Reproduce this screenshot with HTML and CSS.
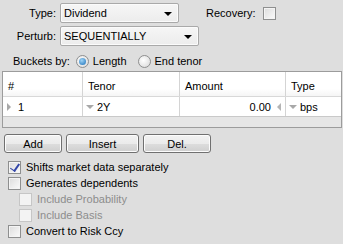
FILE: index.html
```html
<!DOCTYPE html>
<html lang="en">

<head>
    <meta charset="UTF-8">
    <title>Shift settings</title>
    <link rel="stylesheet" href="styles.css">
</head>

<body>
    <div class="panel">
        <div class="field-row first">
            <span class="field-label">Type:</span>
            <div class="combo combo-type"><span>Dividend</span><i class="combo-arrow"></i></div>
            <span class="recovery-label">Recovery:</span>
            <span class="check"></span>
        </div>

        <div class="field-row second">
            <span class="field-label">Perturb:</span>
            <div class="combo combo-perturb"><span>SEQUENTIALLY</span><i class="combo-arrow"></i></div>
        </div>

        <div class="buckets-row">
            <span>Buckets by:</span>
            <span class="radio checked"></span><span>Length</span>
            <span class="radio"></span><span>End tenor</span>
        </div>

        <div class="grid">
            <div class="grid-head">
                <div class="cell c1">#</div>
                <div class="cell c2">Tenor</div>
                <div class="cell c3">Amount</div>
                <div class="cell c4">Type</div>
            </div>
            <div class="grid-row">
                <div class="cell c1"><i class="tri-right"></i>1</div>
                <div class="cell c2"><i class="tri-down"></i>2Y</div>
                <div class="cell c3 num">0.00<i class="tri-left"></i></div>
                <div class="cell c4"><i class="tri-down"></i>bps</div>
            </div>
            <div class="grid-empty"></div>
        </div>

        <div class="button-row">
            <button class="btn btn-add">Add</button>
            <button class="btn btn-insert">Insert</button>
            <button class="btn btn-del">Del.</button>
        </div>

        <div class="options">
            <label class="option"><span class="check checked"></span>Shifts market data separately</label>
            <label class="option"><span class="check"></span>Generates dependents</label>
            <label class="option sub disabled"><span class="check"></span>Include Probability</label>
            <label class="option sub disabled"><span class="check"></span>Include Basis</label>
            <label class="option"><span class="check"></span>Convert to Risk Ccy</label>
        </div>
    </div>
</body>

</html>
```

FILE: styles.css
```css
* {
    margin: 0;
    padding: 0;
    box-sizing: border-box;
}

body {
    font-family: 'Liberation Sans', Arial, sans-serif;
    font-size: 11px;
    color: #000;
    background: #dedede;
    width: 343px;
    height: 244px;
    overflow: hidden;
}

.panel {
    padding-top: 3px;
}

.field-row {
    display: flex;
    align-items: center;
    height: 20px;
}

.field-row.second {
    margin-top: 3px;
}

.field-label {
    width: 60px;
    padding-right: 4px;
    text-align: right;
}

.combo {
    position: relative;
    height: 20px;
    border: 1px solid #a9a9a9;
    border-radius: 2px;
    background: linear-gradient(#f6f6f6, #ececec);
    box-shadow: inset 0 0 0 1px #fbfbfb;
    padding-left: 3px;
    display: flex;
    align-items: center;
}

.combo-type {
    width: 119px;
}

.combo-perturb {
    width: 139px;
}

.combo-arrow {
    position: absolute;
    right: 6px;
    top: 8px;
    border-left: 4px solid transparent;
    border-right: 4px solid transparent;
    border-top: 4px solid #000;
}

.recovery-label {
    margin-left: 27px;
}

.recovery-label + .check {
    margin-left: 7px;
}

.check {
    display: inline-block;
    position: relative;
    width: 13px;
    height: 13px;
    border: 1px solid #8e8f8f;
    background: linear-gradient(135deg, #dcdcdc, #fbfbfb);
    box-shadow: inset 0 0 0 1px #f4f4f4;
    flex: none;
}

.check.checked::after {
    content: '';
    position: absolute;
    left: 3px;
    top: 0;
    width: 4px;
    height: 8px;
    border-right: 2px solid #3346a8;
    border-bottom: 1px solid #3346a8;
    transform: rotate(35deg);
}

.buckets-row {
    display: flex;
    align-items: center;
    height: 16px;
    margin-top: 7px;
    padding-left: 13px;
}

.radio {
    display: inline-block;
    position: relative;
    width: 13px;
    height: 13px;
    border: 1px solid #8e8f8f;
    border-radius: 50%;
    background: radial-gradient(circle at 40% 40%, #ffffff, #d6d6d6);
    margin: 0 4px 0 6px;
}

.radio + span + .radio {
    margin-left: 11px;
}

.radio.checked::after {
    content: '';
    position: absolute;
    left: 2px;
    top: 2px;
    width: 7px;
    height: 7px;
    border-radius: 50%;
    background: radial-gradient(circle at 40% 35%, #9fd4f6, #1b6fb8);
}

.grid {
    margin: 2px 1px 0 2px;
    height: 57px;
    border: 1px solid #9c9c9c;
    background: #e6e6e6;
}

.grid-head,
.grid-row {
    display: flex;
    background: #fff;
}

.grid-head {
    height: 25px;
    border-bottom: 1px solid #d8d8d8;
    background: linear-gradient(#ffffff 70%, #f5f5f5);
}

.grid-row {
    height: 20px;
    border-bottom: 1px solid #c9c9c9;
}

.cell {
    display: flex;
    align-items: center;
    border-right: 1px solid #d4d4d4;
    padding-left: 5px;
}

.grid-head .cell {
    padding-top: 3px;
}

.c1 {
    width: 80px;
}

.c2 {
    width: 97px;
}

.c3 {
    width: 106px;
}

.c4 {
    flex: 1;
    border-right: none;
}

.grid-row .c1 {
    padding-left: 4px;
}

.grid-row .c2,
.grid-row .c4 {
    padding-left: 3px;
}

.num {
    justify-content: flex-end;
    padding-right: 4px;
}

.tri-right {
    border-top: 4px solid transparent;
    border-bottom: 4px solid transparent;
    border-left: 4px solid #a8a8a8;
    margin-right: 7px;
}

.tri-down {
    border-left: 4px solid transparent;
    border-right: 4px solid transparent;
    border-top: 4px solid #a8a8a8;
    margin-right: 3px;
}

.tri-left {
    border-top: 4px solid transparent;
    border-bottom: 4px solid transparent;
    border-right: 4px solid #b4b4b4;
    margin-left: 6px;
}

.button-row {
    display: flex;
    gap: 4px;
    margin: 6px 0 0 4px;
}

.btn {
    font: inherit;
    height: 19px;
    border: 1px solid #707070;
    border-radius: 3px;
    background: linear-gradient(#f2f2f2 0%, #ebebeb 50%, #dddddd 51%, #cfcfcf 100%);
    box-shadow: inset 0 0 0 1px #fcfcfc;
    color: #000;
}

.btn-add {
    width: 58px;
}

.btn-insert {
    width: 73px;
}

.btn-del {
    width: 68px;
}

.options {
    margin-top: 6px;
    padding-left: 8px;
}

.option {
    display: flex;
    align-items: center;
    height: 16px;
    gap: 5px;
}

.option.sub {
    padding-left: 11px;
}

.option.disabled {
    color: #8d8d8d;
}

.option.disabled .check {
    border-color: #c6c6c6;
    background: #f3f3f3;
    box-shadow: none;
}
```
